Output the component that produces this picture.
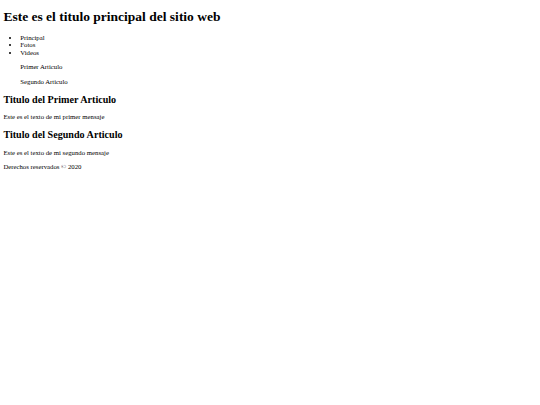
export default function App() {
  return (
    <div className="m-[3.375px] font-['Liberation_Serif',_'Times_New_Roman',_serif] text-[6.75px] leading-[7.594px] text-black">
      <header>
        <h1 className="my-[9.045px] text-[13.5px] font-bold leading-[15.61px]">Este es el titulo principal del sitio web</h1>
        <ul className="my-[6.75px] list-disc pl-[16.875px]">
          <li>Principal</li>
          <li>Fotos</li>
          <li>Videos</li>
        </ul>
      </header>
      <nav className="pl-[16.875px]">
        <p className="my-[6.75px]">Primer Articulo</p>
        <p className="my-[6.75px]">Segundo Articulo</p>
      </nav>
      <article>
        <h2 className="my-[8.4px] text-[10.125px] font-bold leading-[11.39px]">Titulo del Primer Articulo</h2>
        <p className="my-[6.75px]">Este es el texto de mi primer mensaje</p>
      </article>
      <article>
        <h2 className="my-[8.4px] text-[10.125px] font-bold leading-[11.39px]">Titulo del Segundo Articulo</h2>
        <p className="my-[6.75px]">Este es el texto de mi segundo mensaje</p>
      </article>
      <footer>
        <p className="my-[6.75px]">Derechos reservados © 2020</p>
      </footer>
    </div>
  );
}
